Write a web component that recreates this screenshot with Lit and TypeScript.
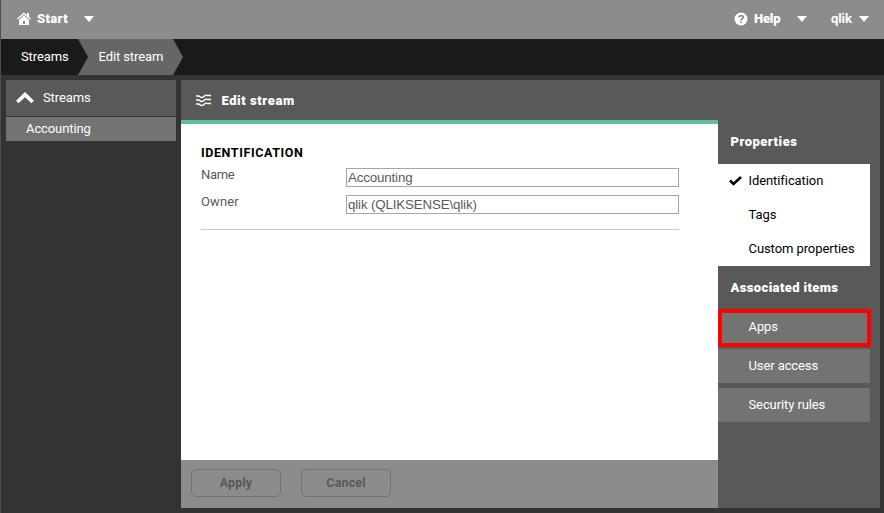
import { LitElement, html, css, svg } from "lit";
import { customElement } from "lit/decorators.js";

const caret = html`<svg class="caret" width="10" height="6" viewBox="0 0 10 6"><path d="M0 0H10L5 6Z" fill="#fff" /></svg>`;

@customElement("app-root")
export class AppRoot extends LitElement {
  static styles = css`
    :host {
      display: flex;
      flex-direction: column;
      box-sizing: border-box;
      width: 884px;
      height: 513px;
      border-left: 1px solid #4d4d4d;
      background: #333;
      color: #fff;
      font: 13px/18px Roboto, "Liberation Sans", sans-serif;
      overflow: hidden;
      white-space: nowrap;
    }
    * { box-sizing: border-box; }
    svg { display: block; flex: none; }
    .top {
      flex: none;
      height: 39px;
      background: #8c8c8c;
      display: flex;
      align-items: center;
      padding: 0 15px 2px 16px;
      font-weight: 900;
    }
    .start { margin-left: 6px; width: 47px; letter-spacing: 0.35px; }
    .help { margin-left: 6px; width: 43px; letter-spacing: -0.2px; }
    .grow { flex: 1; }
    .user { margin-left: 24px; width: 28px; letter-spacing: -0.1px; font-weight: 700; }
    .crumbs {
      flex: none;
      height: 36px;
      background: #1a1a1a;
      display: flex;
      line-height: 35px;
    }
    .crumb { padding-left: 20px; width: 77px; letter-spacing: -0.1px; }
    .current {
      width: 105px;
      padding-left: 20.5px;
      background: #666;
      clip-path: polygon(0 0, 95px 0, 105px 50%, 95px 100%, 0 100%, 10px 50%);
      letter-spacing: -0.1px;
    }
    .body { flex: 1; min-height: 0; display: flex; gap: 5px; padding: 5px 4px 5px 5px; }
    .side { width: 170px; letter-spacing: -0.1px; }
    .side-head {
      height: 36px;
      background: #595959;
      display: flex;
      align-items: center;
      padding: 0 0 1px 10px;
      gap: 8px;
    }
    .side-item { margin-top: 1px; height: 24px; line-height: 23px; padding-left: 20px; background: #737373; }
    .panel { flex: 1; display: flex; background: #595959; }
    .main { width: 537px; display: flex; flex-direction: column; }
    .title {
      height: 44px;
      border-bottom: 4px solid #61bd9b;
      display: flex;
      align-items: center;
      padding: 1px 0 0 15px;
      gap: 10.5px;
      font-weight: 900;
      letter-spacing: 0.57px;
    }
    .form { flex: 1; background: #fff; padding: 20px 39px 0 20px; color: #595959; }
    .form h2 { margin: 0; font-size: 12.5px; line-height: 18px; font-weight: 700; letter-spacing: 0.6px; color: #000; }
    .row { display: flex; height: 27px; }
    .row label { width: 145px; line-height: 18px; margin-top: 4px; letter-spacing: -0.3px; }
    .row + .row label { letter-spacing: 0.1px; }
    .field {
      flex: 1;
      height: 19px;
      margin-top: 6px;
      border: 1px solid #a6a6a6;
      padding-left: 1px;
      font: 13.33px/17px "Liberation Sans", sans-serif;
      letter-spacing: -0.15px;
    }
    .rule { height: 1px; background: #ccc; margin-top: 13px; }
    .actions { height: 48px; background: #8c8c8c; display: flex; gap: 20px; padding: 9px 10px; }
    .btn {
      width: 90px;
      height: 28px;
      border: 1px solid #737373;
      border-radius: 5px;
      text-align: center;
      line-height: 26px;
      font-size: 12.5px;
      font-weight: 700;
      letter-spacing: 0.15px;
      color: #595959;
    }
    .props { flex: 1; padding: 52px 10px 0 0; }
    .heading { padding-left: 12.5px; font-weight: 900; line-height: 19px; letter-spacing: 0.5px; }
    .tabs { margin-top: 13px; background: #fff; color: #000; }
    .tab { height: 34px; display: flex; align-items: center; padding-left: 11px; letter-spacing: -0.08px; }
    .mark { width: 19.5px; }
    .assoc { margin-top: 12px; letter-spacing: 0.38px; }
    .items { margin-top: 13px; display: flex; flex-direction: column; gap: 5px; letter-spacing: -0.1px; }
    .item { height: 34px; line-height: 33px; padding-left: 30.5px; background: #737373; position: relative; }
    .marked::after {
      content: "";
      position: absolute;
      inset: -1px -1px -3px 0;
      border: 4px solid #f00;
    }
  `;

  render() {
    return html`
      <header class="top">
        <svg width="14" height="14" viewBox="0 0 14 14"><path fill="#fff" fill-rule="evenodd" d="M7 .5L0 6.5L.8 7.5L7 2.4L13.2 7.5L14 6.5L12 4.7V1H10V3ZM2 7.8L7 3.5L12 7.8V13H2ZM6 9V12H8V9Z" /></svg>
        <span class="start">Start</span>${caret}
        <span class="grow"></span>
        <svg width="14" height="14" viewBox="0 0 14 14"><circle cx="7" cy="7" r="6.5" fill="#fff" /><path d="M4.8 5.3C5 3.4 9.2 3.3 9.2 5.4C9.2 6.8 7 6.8 7 8.5M7 9.6V11" fill="none" stroke="#808080" stroke-width="1.5" /></svg>
        <span class="help">Help</span>${caret}
        <span class="user">qlik</span>${caret}
      </header>
      <nav class="crumbs">
        <span class="crumb">Streams</span><span class="current">Edit stream</span>
      </nav>
      <div class="body">
        <aside class="side">
          <div class="side-head">
            <svg width="19" height="12" viewBox="0 0 19 12"><path d="M1.3 10L9 2.6L16.7 10" fill="none" stroke="#fff" stroke-width="3.6" /></svg>
            <span>Streams</span>
          </div>
          <div class="side-item"><span>Accounting</span></div>
        </aside>
        <section class="panel">
          <div class="main">
            <div class="title">
              <svg width="15" height="13" viewBox="0 0 15 13">${[2.5, 6.5, 10.5].map((y) => svg`<path d="M0 ${y - 0.5}H2.5C4 ${y - 0.5} 4 ${y + 1} 5.5 ${y + 1}C7.5 ${y + 1} 8 ${y} 9 ${y - 1}C10 ${y - 2} 11 ${y - 1} 12 ${y - 1}H15" fill="none" stroke="#fff" stroke-width="1.3" />`)}</svg>
              <span>Edit stream</span>
            </div>
            <div class="form">
              <h2><span>IDENTIFICATION</span></h2>
              <div class="row"><label>Name</label><div class="field">Accounting</div></div>
              <div class="row"><label>Owner</label><div class="field">qlik (QLIKSENSE\\qlik)</div></div>
              <div class="rule"></div>
            </div>
            <div class="actions"><div class="btn">Apply</div><div class="btn">Cancel</div></div>
          </div>
          <div class="props">
            <div class="heading">Properties</div>
            <div class="tabs">
              <div class="tab"><span class="mark"><svg width="13" height="10" viewBox="0 0 13 10"><path d="M1 4.5L4.5 8L12 1" fill="none" stroke="#000" stroke-width="2.6" /></svg></span>Identification</div>
              <div class="tab"><span class="mark"></span>Tags</div>
              <div class="tab"><span class="mark"></span>Custom properties</div>
            </div>
            <div class="heading assoc">Associated items</div>
            <div class="items">
              <div class="item marked">Apps</div>
              <div class="item">User access</div>
              <div class="item">Security rules</div>
            </div>
          </div>
        </section>
      </div>
    `;
  }
}
